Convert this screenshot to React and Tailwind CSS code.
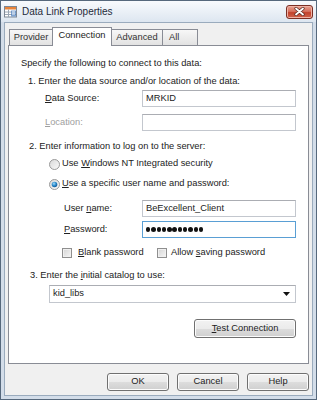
import React from "react";

function Btn({ children, className }) {
  return (
    <div
      className={
        "flex items-center justify-center rounded-[3px] border border-[#707070] bg-[linear-gradient(to_bottom,#f2f2f2_0%,#ebebeb_50%,#dddddd_50%,#cfcfcf_100%)] shadow-[inset_0_0_0_1px_#fcfcfc] text-[#222] " +
        className
      }
    >
      {children}
    </div>
  );
}

function Field({ children, focused }) {
  return (
    <div
      className={
        focused
          ? "flex h-[17px] w-[154px] items-center border border-[#5a9fd4] bg-white pl-[3px]"
          : "flex h-[17px] w-[154px] items-center border border-[#c3c7ce] border-t-[#abadb3] bg-white pl-[3px]"
      }
    >
      {children}
    </div>
  );
}

function Radio({ checked }) {
  return (
    <svg width="11" height="11" viewBox="0 0 11 11" className="shrink-0">
      <defs>
        <linearGradient id="rg" x1="0" y1="0" x2="1" y2="1">
          <stop offset="0" stopColor="#d8d8d8" />
          <stop offset="1" stopColor="#fbfbfb" />
        </linearGradient>
        <radialGradient id="rb" cx="0.4" cy="0.35" r="0.7">
          <stop offset="0" stopColor="#a9dcf6" />
          <stop offset="0.5" stopColor="#2f8fd0" />
          <stop offset="1" stopColor="#0f4f8c" />
        </radialGradient>
      </defs>
      <circle cx="5.5" cy="5.5" r="5" fill="url(#rg)" stroke="#9a9a9a" strokeWidth="1" />
      {checked && <circle cx="5.5" cy="5.5" r="2.8" fill="url(#rb)" />}
    </svg>
  );
}

function Check() {
  return (
    <div className="h-[10px] w-[10px] shrink-0 border border-[#8f8f8f] bg-[linear-gradient(135deg,#d4d4d4,#f6f6f6)] shadow-[inset_0_0_0_1px_#f0f0f0]" />
  );
}

function AppIcon() {
  return (
    <svg width="13" height="13" viewBox="0 0 13 13">
      <rect x="0.5" y="1.5" width="12" height="10.5" fill="#ffffff" stroke="#7d8794" />
      <rect x="1" y="2" width="11" height="2.5" fill="#e8833a" />
      <line x1="1" y1="7" x2="12" y2="7" stroke="#9aa6b4" />
      <line x1="1" y1="9.5" x2="12" y2="9.5" stroke="#9aa6b4" />
      <line x1="4.5" y1="4.5" x2="4.5" y2="12" stroke="#9aa6b4" />
      <rect x="7" y="5.5" width="5" height="6" fill="#4a7fc1" opacity="0.7" />
      <rect x="8" y="6.5" width="3" height="1" fill="#ffffff" />
      <rect x="8" y="8.5" width="3" height="1" fill="#ffffff" />
    </svg>
  );
}

export default function App() {
  const dots = Array.from({ length: 11 });
  return (
    <div className="flex h-[400px] w-[317px] flex-col border border-[#56687c] bg-[#d3dde9] font-['Liberation_Sans',Arial,sans-serif] text-[9.3px] leading-none text-[#222]">
      {/* Title bar */}
      <div className="flex h-[21px] items-center bg-[linear-gradient(to_bottom,#f8fafd,#dde6f0)] pl-[3px] pr-[3px]">
        <AppIcon />
        <span className="ml-[5px] flex-1 text-[10px] text-[#1e2a3a]">Data Link Properties</span>
        <div className="flex h-[14px] w-[27px] items-center justify-center rounded-[3px] border border-[#7b2f24] bg-[linear-gradient(to_bottom,#e9a394_0%,#d6705d_45%,#c2422c_55%,#d0634c_100%)] shadow-[inset_0_0_0_1px_#f0b3a6]">
          <svg width="11" height="9" viewBox="0 0 11 9">
            <path d="M2 1.5 L9 7.5 M9 1.5 L2 7.5" stroke="#5a2a22" strokeWidth="3.2" strokeLinecap="round" />
            <path d="M2 1.5 L9 7.5 M9 1.5 L2 7.5" stroke="#ffffff" strokeWidth="1.8" strokeLinecap="round" />
          </svg>
        </div>
      </div>

      {/* Body */}
      <div className="mx-[3px] mb-[3px] flex flex-1 flex-col border border-[#9aabbd] bg-[#f0f0f0] px-[3px] pt-[4px]">
        {/* Tabs */}
        <div className="relative z-10 flex h-[19px] items-end pl-[1px]">
          <div className="mb-[1px] flex h-[16px] w-[44px] items-center justify-center border border-b-0 border-[#898c95] bg-[linear-gradient(to_bottom,#f7f7f7,#e2e2e2)] text-[#333]">
            Provider
          </div>
          <div className="-ml-[1px] flex h-[19px] w-[60px] items-center justify-center border border-b-0 border-[#898c95] bg-white pb-[2px]">
            Connection
          </div>
          <div className="-ml-[1px] mb-[1px] flex h-[16px] w-[52px] items-center justify-center border border-b-0 border-[#898c95] bg-[linear-gradient(to_bottom,#f7f7f7,#e2e2e2)] text-[#333]">
            Advanced
          </div>
          <div className="-ml-[1px] mb-[1px] flex h-[16px] w-[36px] items-center justify-start border border-b-0 border-[#898c95] bg-[linear-gradient(to_bottom,#f7f7f7,#e2e2e2)] pl-[6px] text-[#333]">
            All
          </div>
        </div>

        {/* Panel */}
        <div className="-mt-[1px] flex h-[319px] flex-col border border-[#898c95] bg-white pt-[9px]">
          <div className="flex h-[18px] items-center pl-[12px]">
            <span>Specify the following to connect to this data:</span>
          </div>
          <div className="flex h-[17px] items-center pl-[19px]">
            <span>1. Enter the data source and/or location of the data:</span>
          </div>
          <div className="flex h-[17px] items-center pl-[36px]">
            <span className="w-[97px]">
              <u>D</u>ata Source:
            </span>
            <Field>MRKID</Field>
          </div>
          <div className="mt-[7px] flex h-[17px] items-center pl-[36px]">
            <span className="w-[97px] text-[#a0a0a0]">
              <u>L</u>ocation:
            </span>
            <Field></Field>
          </div>
          <div className="mt-[8px] flex h-[16px] items-center pl-[20px]">
            <span>2. Enter information to log on to the server:</span>
          </div>
          <div className="mt-[1px] flex h-[16px] items-center gap-[2px] pl-[40px]">
            <Radio />
            <span>
              Use <u>W</u>indows NT Integrated security
            </span>
          </div>
          <div className="mt-[4px] flex h-[16px] items-center gap-[2px] pl-[40px]">
            <Radio checked />
            <span>
              <u>U</u>se a specific user name and password:
            </span>
          </div>
          <div className="mt-[8px] flex h-[17px] items-center pl-[55px]">
            <span className="w-[78px]">
              User <u>n</u>ame:
            </span>
            <Field>BeExcellent_Client</Field>
          </div>
          <div className="mt-[4px] flex h-[17px] items-center pl-[55px]">
            <span className="w-[78px]">
              <u>P</u>assword:
            </span>
            <Field focused>
              <div className="flex gap-[0.9px]">
                {dots.map((_, i) => (
                  <span key={i} className="h-[4.4px] w-[4.4px] rounded-full bg-[#111]" />
                ))}
              </div>
            </Field>
          </div>
          <div className="mt-[7px] flex h-[16px] items-center pl-[53px]">
            <div className="flex w-[95px] items-center gap-[6px]">
              <Check />
              <span>
                <u>B</u>lank password
              </span>
            </div>
            <div className="flex items-center gap-[4px]">
              <Check />
              <span>
                Allow <u>s</u>aving password
              </span>
            </div>
          </div>
          <div className="mt-[7px] flex h-[16px] items-center pl-[21px]">
            <span>
              3. Enter the <u>i</u>nitial catalog to use:
            </span>
          </div>
          <div className="ml-[40px] mt-[1px] flex h-[18px] w-[247px] items-center justify-between border border-[#c3c7ce] border-t-[#abadb3] bg-white pl-[3px] pr-[5px]">
            <span>kid_libs</span>
            <svg width="7" height="4" viewBox="0 0 7 4">
              <path d="M0 0 L7 0 L3.5 4 Z" fill="#111" />
            </svg>
          </div>
          <Btn className="ml-[185px] mt-[16px] h-[19px] w-[102px]">
            <span>
              <u>T</u>est Connection
            </span>
          </Btn>
        </div>

        {/* Bottom buttons */}
        <div className="mt-[9px] flex justify-end gap-[8px]">
          <Btn className="h-[18px] w-[62px]">OK</Btn>
          <Btn className="h-[18px] w-[62px]">Cancel</Btn>
          <Btn className="h-[18px] w-[62px]">Help</Btn>
        </div>
      </div>
    </div>
  );
}
